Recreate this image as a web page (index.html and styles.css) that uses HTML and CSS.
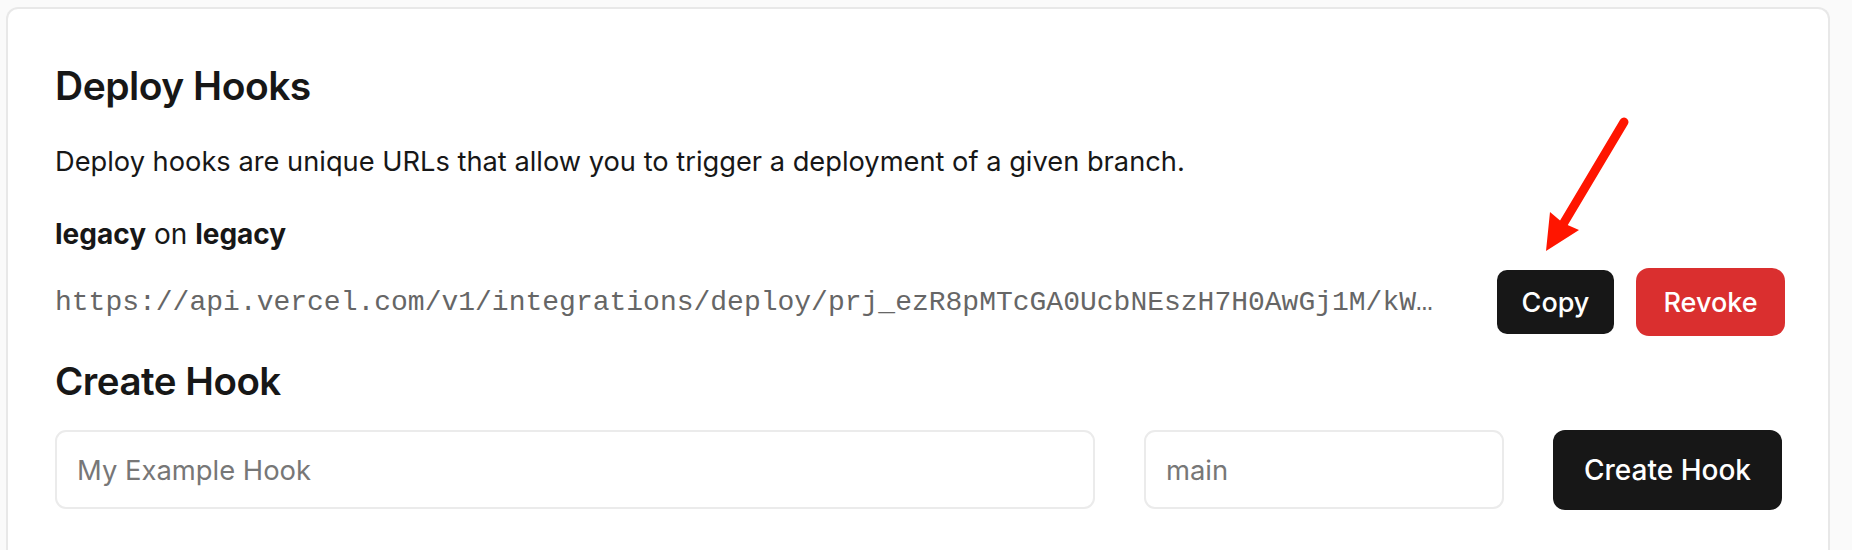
FILE: index.html
```html
<!DOCTYPE html>
<html lang="en">
<head>
<meta charset="utf-8">
<title>Deploy Hooks</title>
<link rel="stylesheet" href="styles.css">
</head>
<body>
<section class="card">
  <h2 class="title">Deploy Hooks</h2>
  <p class="desc">Deploy hooks are unique URLs that allow you to trigger a deployment of a given branch.</p>
  <div class="hook-name"><strong>legacy</strong> on <strong>legacy</strong></div>
  <div class="hook-row">
    <code class="hook-url">https://api.vercel.com/v1/integrations/deploy/prj_ezR8pMTcGA0UcbNEszH7H0AwGj1M/kW…</code>
    <div class="hook-actions">
      <button class="btn btn-dark btn-copy">Copy</button>
      <button class="btn btn-red">Revoke</button>
    </div>
  </div>
  <h3 class="subtitle">Create Hook</h3>
  <div class="create-row">
    <input class="field" type="text" placeholder="My Example Hook">
    <input class="field" type="text" placeholder="main">
    <button class="btn btn-dark btn-create">Create Hook</button>
  </div>
  <svg class="arrow" width="110" height="160" viewBox="0 0 110 160" aria-hidden="true">
    <line x1="92" y1="20" x2="30" y2="124" stroke="#ff1500" stroke-width="9" stroke-linecap="round"/>
    <polygon points="14,149 18,110 31,121 47,128" fill="#ff1500"/>
  </svg>
</section>
</body>
</html>
```

FILE: styles.css
```css
* { box-sizing: border-box; }

html, body {
  margin: 0;
  padding: 0;
  background: #fafafa;
}

body {
  padding: 7px 22px 0 6px;
  font-family: Inter, "Noto Sans", sans-serif;
  color: #171717;
}

.card {
  position: relative;
  background: #fff;
  border: 2px solid #e8e8e8;
  border-bottom: none;
  border-radius: 12px 12px 0 0;
  padding: 53px 43px 60px 47px;
  min-height: 560px;
}

.title {
  margin: 0;
  font-size: 39px;
  line-height: 48px;
  font-weight: 600;
  letter-spacing: -0.5px;
}

.desc {
  margin: 32px 0 0;
  font-size: 27.25px;
  line-height: 40px;
  font-weight: 400;
}

.hook-name {
  margin-top: 32px;
  font-size: 28px;
  line-height: 40px;
}

.hook-name strong { font-weight: 700; }

.hook-row {
  display: flex;
  align-items: center;
  justify-content: space-between;
  margin-top: 14px;
  height: 68px;
}

.hook-url {
  font-family: "Liberation Mono", "DejaVu Sans Mono", monospace;
  font-size: 28px;
  color: #666;
  white-space: nowrap;
}

.hook-actions {
  display: flex;
  align-items: center;
  gap: 22px;
}

.btn {
  border: none;
  font-family: Inter, "Noto Sans", sans-serif;
  font-size: 27px;
  font-weight: 500;
  color: #fff;
  cursor: pointer;
}

.btn-dark { background: #171717; }
.btn-red { background: #da2f2f; }

.btn-copy {
  width: 117px;
  height: 64px;
  border-radius: 10px;
}

.btn-red {
  width: 149px;
  height: 68px;
  border-radius: 13px;
}

.subtitle {
  margin: 21px 0 0;
  font-size: 38.5px;
  line-height: 48px;
  font-weight: 600;
  letter-spacing: -0.5px;
}

.create-row {
  display: grid;
  grid-template-columns: 1fr 360px 229px;
  gap: 49px;
  margin: 25px 3px 0 0;
}

.field {
  height: 79px;
  border: 2px solid #ebebeb;
  border-radius: 11px;
  padding: 0 20px;
  font-family: Inter, "Noto Sans", sans-serif;
  font-size: 27.4px;
  color: #171717;
  background: #fff;
  outline: none;
}

.field::placeholder { color: #777; }

.btn-create {
  height: 80px;
  border-radius: 12px;
  font-size: 28px;
}

.arrow {
  position: absolute;
  left: 1524px;
  top: 93px;
}
```
